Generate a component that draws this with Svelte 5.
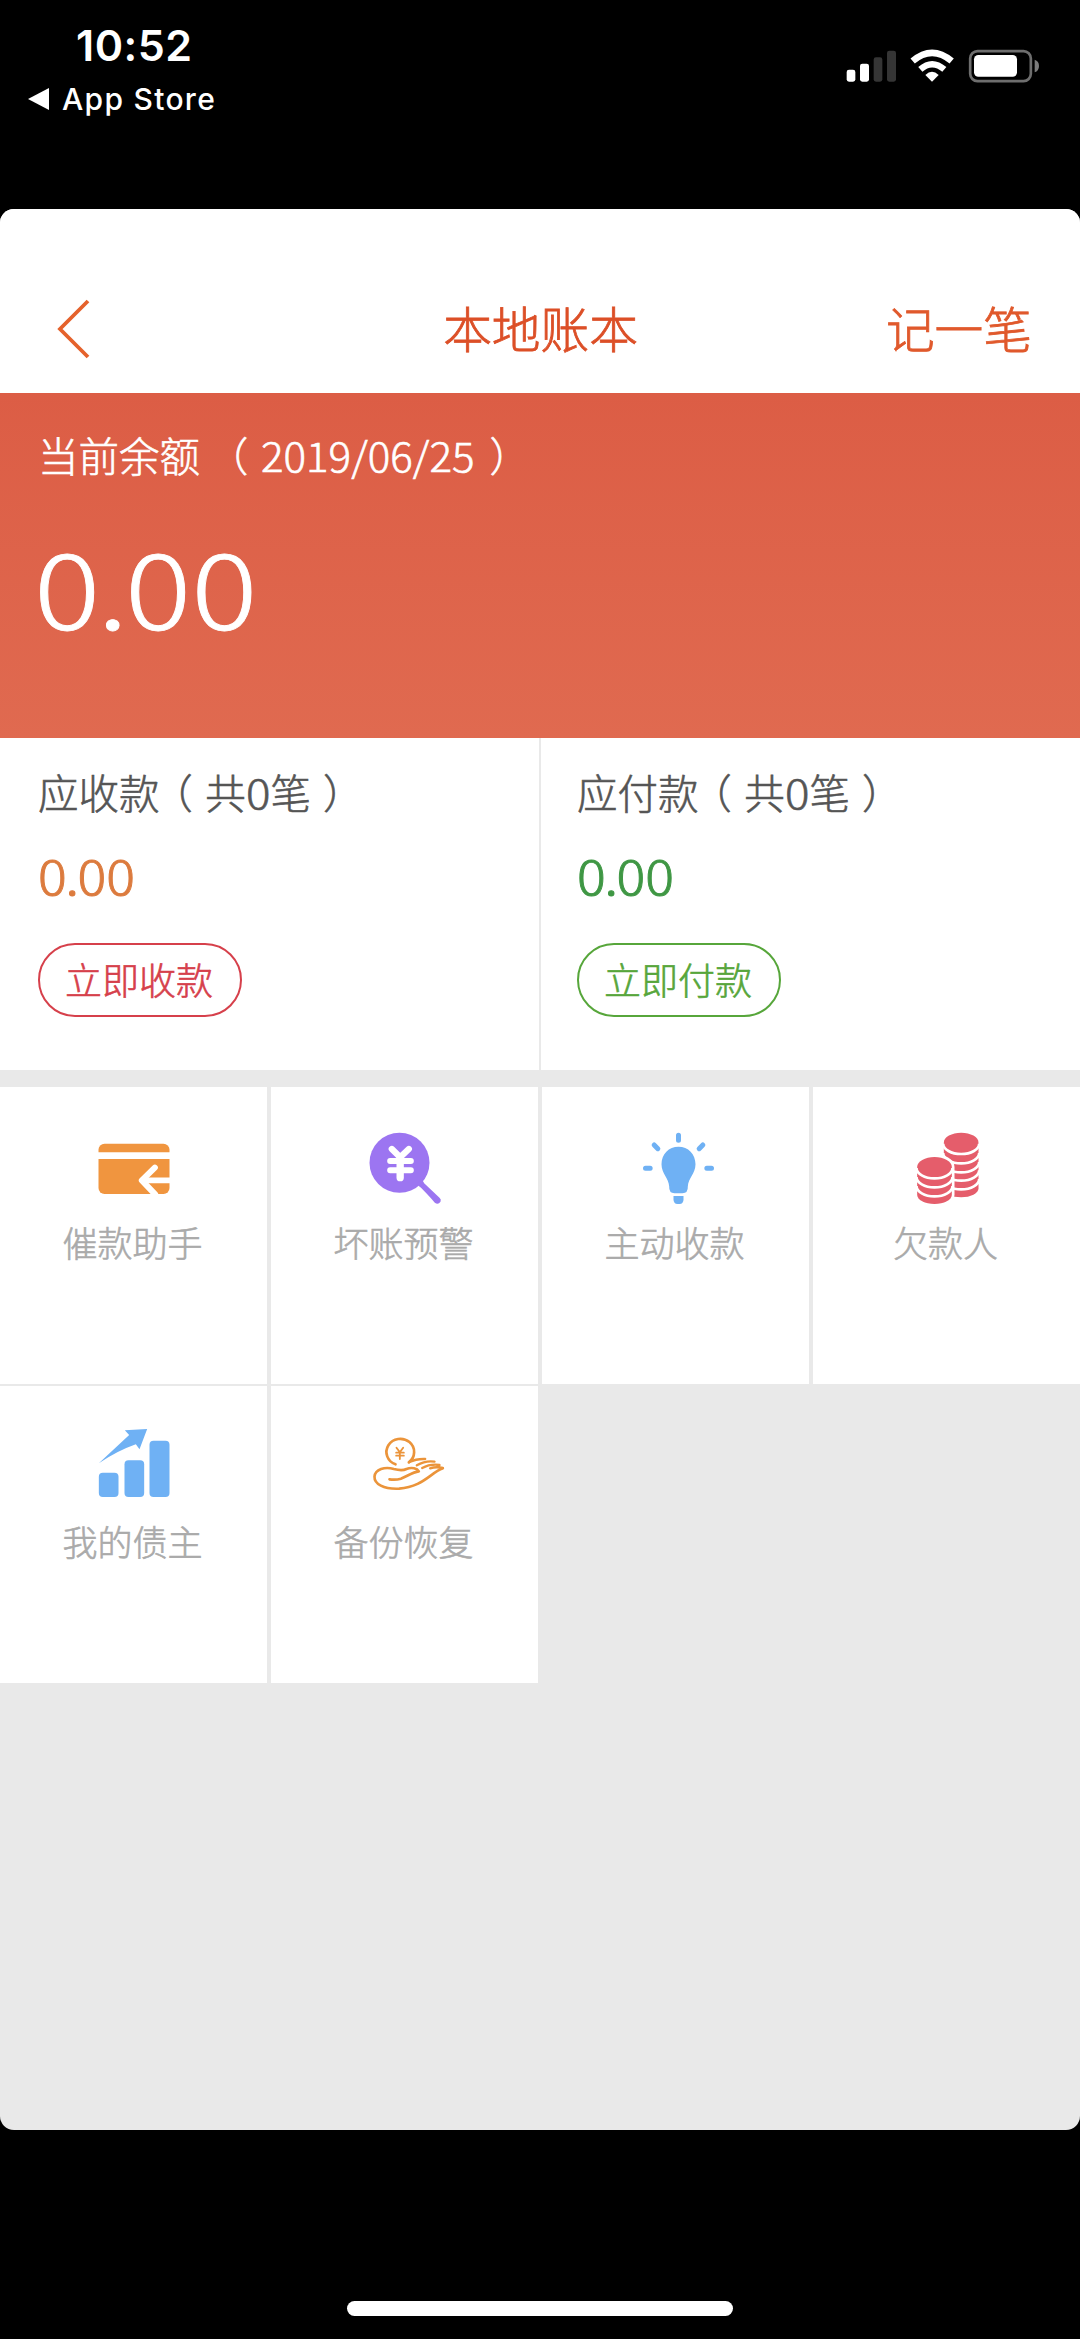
<script>
  const ledgers = [
    { kind: 'receive', name: '应收款', action: '立即收款' },
    { kind: 'pay', name: '应付款', action: '立即付款' }
  ];
  const tools = [
    { icon: 'card', label: '催款助手', box: '94.5 48 252 252' },
    { icon: 'search', label: '坏账预警', box: '907.5 48 252 252' },
    { icon: 'bulb', label: '主动收款', box: '100.5 48 252 252' },
    { icon: 'coins', label: '欠款人', box: '913.5 48 252 252' },
    { icon: 'chart', label: '我的债主', box: '94.5 165 252 252' },
    { icon: 'hand', label: '备份恢复', box: '907.5 165 252 252' }
  ];
</script>

<div class="phone">
  <header class="status">
    <div class="status-left">
      <div class="time">10:52</div>
      <div class="return">
        <svg class="tri" viewBox="0 0 21 22"><path d="M0 11 L21 0 V22 Z" fill="#fff" /></svg>
        <span>App Store</span>
      </div>
    </div>
    <svg class="indicators" viewBox="135 85 590 108">
      <rect x="140" y="150" width="26" height="36" rx="7" fill="#fff" />
      <rect x="180" y="132" width="27" height="54" rx="7" fill="#fff" />
      <rect x="221" y="113" width="26" height="73" rx="7" fill="#353535" />
      <rect x="261" y="93" width="27" height="93" rx="7" fill="#353535" />
      <g fill="none" stroke="#fff">
        <path d="M338 124 Q396 75 455 124" stroke-width="20" />
        <path d="M361 149 Q396 118 433 149" stroke-width="19" />
      </g>
      <path d="M396 186 L376 166 Q396 146 416 166 Z" fill="#fff" />
      <rect x="510.500" y="94.500" width="182" height="90" rx="22" fill="none" stroke="#6e6e6e" stroke-width="8" />
      <rect x="522" y="106" width="129" height="65" rx="13" fill="#fff" />
      <path d="M704 120 Q717 124 717 139 Q717 154 704 158 Z" fill="#7c7c7c" />
    </svg>
  </header>

  <main class="app">
    <nav class="bar">
      <svg class="back" viewBox="0 0 34 60"><path d="M31 2 L3 30 L31 58" fill="none" stroke="#e5622c" stroke-width="3.800" /></svg>
      <h1>本地账本</h1>
      <span class="add">记一笔</span>
    </nav>

    <section class="balance">
      <div class="caption">当前余额<span class="open wide">（</span><span class="num date">2019/06/25</span><span class="close wide">）</span></div>
      <div class="total"><span class="num">0<span class="dot">.</span>00</span></div>
    </section>

    <section class="ledgers">
      {#each ledgers as l}
        <div class="ledger {l.kind}">
          <div class="caption">{l.name}<span class="open">（</span>共<span class="num zero">0</span>笔<span class="close">）</span></div>
          <div class="amount"><span class="num">0<span class="dot">.</span>00</span></div>
          <button>{l.action}</button>
        </div>
      {/each}
    </section>

    <section class="tools">
      {#each tools as t}
        <div class="tool">
          <svg viewBox={t.box}>
            {#if t.icon === 'card'}
              <rect x="117" y="101" width="213" height="151" rx="18" fill="#f0953f" />
              <path d="M112 137 H335" stroke="#fff" stroke-width="20" />
              <g fill="none" stroke="#fff" stroke-linecap="round" stroke-linejoin="round">
                <path d="M286 173 L247 211 L287 253" stroke-width="18" />
                <path d="M250 211 H335" stroke-width="17" />
              </g>
            {:else if t.icon === 'search'}
              <circle cx="1020" cy="158" r="90" fill="#9c75f1" />
              <path d="M1070 222 Q1084 230 1126 278 Q1136 285 1143 275 Q1146 268 1140 263 L1094 220 Q1088 214 1091 205 Z" fill="#9c75f1" />
              <g fill="none" stroke="#fff" stroke-linecap="round" stroke-linejoin="round">
                <path d="M997 117 L1022 142 L1048 117" stroke-width="19" />
                <path d="M992 153 H1054 M992 181 H1054" stroke-width="18" />
                <path d="M1022 146 V203" stroke-width="22" />
              </g>
            {:else if t.icon === 'bulb'}
              <g fill="#6fb1f4">
                <path d="M237 110 C266 110 288 132 288 163 C288 191 266 205 265 229 Q266 250 249 250 H225 Q208 250 209 229 C208 205 186 191 186 163 C186 132 208 110 237 110 Z" />
                <path d="M222 258 H252 V268 Q252 282 240 282 H234 Q222 282 222 268 Z" />
              </g>
              <path d="M237 76 V91 M164 105 L175 116 M310 105 L299 116 M138 175 H152 M322 175 H336" fill="none" stroke="#6fb1f4" stroke-width="15" stroke-linecap="round" />
            {:else if t.icon === 'coins'}
              <path d="M1033 98 A52 30 0 0 1 1137 98 V235 A52 27 0 0 1 1033 235 Z" fill="#e55d6b" />
              <path d="M1031 101 A54 31 0 0 0 1139 101 M1031 129 A54 31 0 0 0 1139 129 M1031 156 A54 31 0 0 0 1139 156 M1031 181 A54 31 0 0 0 1139 181 M1031 207 A54 31 0 0 0 1139 207" fill="none" stroke="#fff" stroke-width="8" />
              <path d="M953 171 A52 30 0 0 1 1057 171 V254 A52 28 0 0 1 953 254 Z" fill="#e55d6b" stroke="#fff" stroke-width="16" paint-order="stroke" />
              <path d="M951 174 A54 31 0 0 0 1059 174 M951 201 A54 31 0 0 0 1059 201 M951 228 A54 31 0 0 0 1059 228" fill="none" stroke="#fff" stroke-width="8" />
            {:else if t.icon === 'chart'}
              <g fill="#6fb1f4">
                <rect x="118" y="308" width="59" height="73" rx="12" />
                <rect x="195" y="271" width="59" height="110" rx="12" />
                <rect x="270" y="212" width="60" height="169" rx="12" />
                <path d="M118 280 L209 195 L196 181 L263 177 L240 238 L229 223 Q172 243 118 280 Z" />
              </g>
            {:else}
              <g fill="none" stroke="#eb943a" stroke-width="8" stroke-linecap="round" stroke-linejoin="round">
                <path d="M1008 283 A41.500 39.500 0 1 1 1048 277" />
                <path d="M1011 233 L1021 247 L1031 233 M1010 248 H1033 M1010 257 H1033 M1021 247 V267" stroke-width="5.500" />
                <path d="M1150 295 C1112 309 1089 351 1019 356 C972 358 944 342 945 320 C947 298 976 289 1003 297 C1018 301 1029 303 1041 297 C1057 291 1073 295 1078 304 C1060 306 1042 319 1024 326 Q1008 331 990 328" />
                <path d="M1050 276 Q1070 266 1097 267 M1072 286 Q1098 271 1125 275 M1088 294 Q1112 281 1140 285 M1112 295 Q1130 289 1150 294" stroke-width="7" />
              </g>
            {/if}
          </svg>
          <span>{t.label}</span>
        </div>
      {/each}
    </section>
  </main>

  <footer><div class="home"></div></footer>
</div>

<style>
  :global(body) { margin: 0; background: #000; }
  .phone {
    width: 1080px; height: 2339px; display: flex; flex-direction: column;
    background: #000; overflow: hidden;
    font-family: "Noto Sans CJK SC", sans-serif; font-weight: 300;
  }
  .status {
    height: 209px; box-sizing: border-box; padding: 20px 38px 0 28px;
    display: flex; justify-content: space-between; align-items: flex-start;
    color: #fff; font-family: Inter, sans-serif;
  }
  .time { padding-left: 48px; font-size: 43px; line-height: 51px; font-weight: 600; letter-spacing: 0.5px; }
  .return {
    display: flex; align-items: center; gap: 13px; margin-top: 8px;
    font-size: 30px; line-height: 40px; font-weight: 500; letter-spacing: 1.300px;
  }
  .tri { width: 21px; height: 22px; }
  .indicators { width: 196.7px; height: 36px; margin-top: 28px; }
  .app {
    height: 1921px; border-radius: 14px; overflow: hidden; background: #e9e9e9;
    -webkit-text-stroke: 0.6px currentColor;
  }
  .bar {
    height: 184px; box-sizing: border-box; padding: 52px 48px 0 57px; background: #fff;
    display: grid; grid-template-columns: 184px 1fr 192px; align-items: center;
    color: #dc4f27; font-size: 48.700px; line-height: 60px;
    -webkit-text-stroke-width: 0.8px;
  }
  .back { width: 34px; height: 60px; margin-top: 4px; }
  .bar h1 { margin: 0; font-size: inherit; font-weight: inherit; text-align: center; }
  .add { text-align: right; color: #e0592c; -webkit-text-stroke-color: #e0592c; }
  .balance {
    height: 345px; box-sizing: border-box; padding: 32px 38px 0;
    background: linear-gradient(#dc5d45, #e06a50); color: #fff;
  }
  .caption { font-size: 40.500px; line-height: 60px; white-space: nowrap; }
  .open, .close { font-feature-settings: "halt"; }
  .open { margin: 0 12.500px 0 13px; }
  .open.wide { margin: 0 13px 0 28px; }
  .close { margin-left: 12px; }
  .close.wide { margin-left: 23px; }
  .num { display: inline-block; transform: scaleX(1.18); transform-origin: left; }
  .zero { margin-right: 3px; transform: scaleX(1.13); }
  .date { transform: scaleX(1.04); }
  .dot { margin: 0 -0.025em; }
  .total { margin: 39px 0 0 -4.500px; font-size: 105px; line-height: 120px; -webkit-text-stroke-width: 0.8px; }
  .ledgers { height: 332px; display: grid; grid-template-columns: 539px 541px; background: #fff; }
  .ledger { padding: 24px 38px 0; color: #555; }
  .pay { border-left: 2px solid #e9e9e9; padding-left: 36px; }
  .amount { margin-top: 22px; font-size: 48px; line-height: 60px; -webkit-text-stroke-width: 0.9px; }
  .amount .num { transform: scaleX(1.12); }
  .caption, .amount, .total, .bar h1, .tool { -webkit-text-stroke-color: currentColor; }
  .receive .amount { color: #dc7b3e; }
  .pay .amount { color: #3f9744; }
  button {
    display: block; box-sizing: border-box; width: 204px; height: 74px; margin: 39px 0 0; padding: 0 2px 2px 0;
    border: 2px solid currentColor; border-radius: 38px; background: none;
    font: 300 37px/68px "Noto Sans CJK SC", sans-serif; white-space: nowrap;
    -webkit-text-stroke: 0.6px currentColor;
  }
  .receive button { color: #d6404b; }
  .pay button { color: #57a63b; }
  .tools { margin-top: 17px; display: grid; grid-template-columns: repeat(4, 267px); grid-auto-rows: 297px; gap: 2px 4px; }
  .tool {
    background: #fff; padding-top: 39px; box-sizing: border-box;
    display: flex; flex-direction: column; align-items: center; gap: 7px;
    color: #aaa; font-size: 35px; line-height: 50px;
  }
  .tool svg { width: 84px; height: 84px; flex: none; margin-left: -1px; }
  .tool span { margin-left: -2px; }
  footer { flex: 1; display: flex; justify-content: center; align-items: flex-end; padding-bottom: 23px; }
  .home { width: 386px; height: 15px; border-radius: 8px; background: #fff; }
</style>
